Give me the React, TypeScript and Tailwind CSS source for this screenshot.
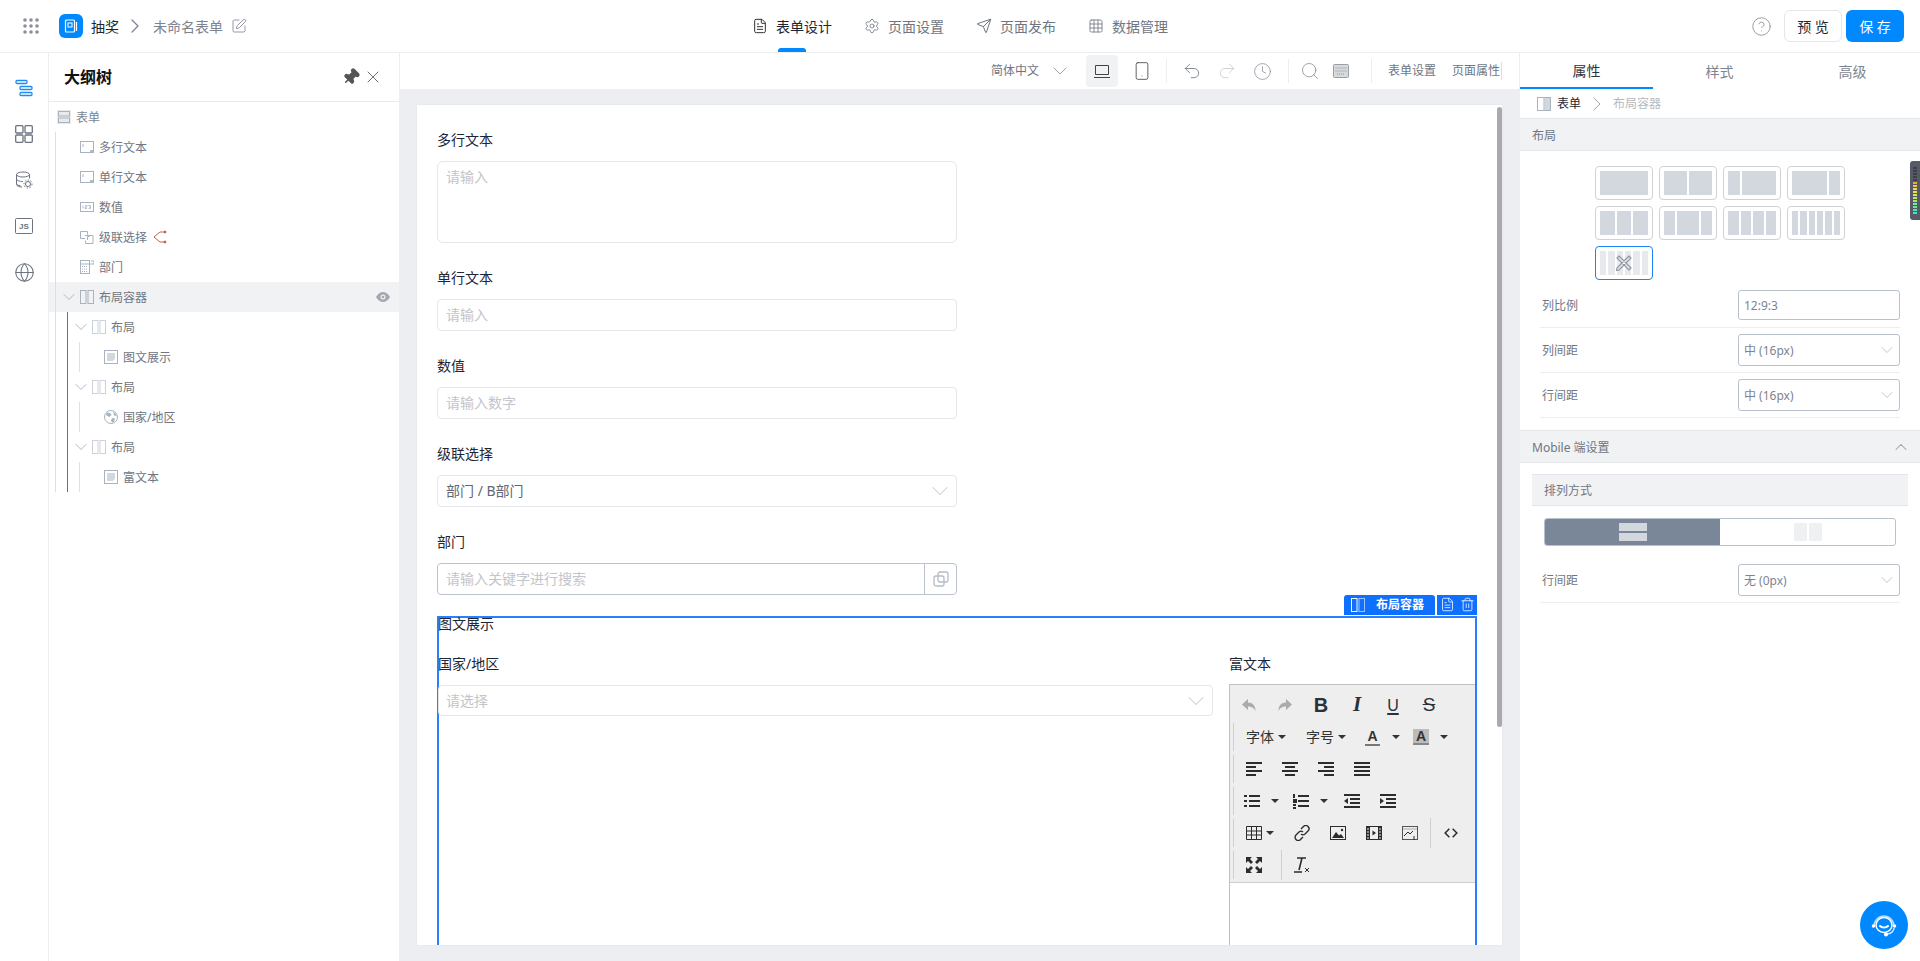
import React from "react";
import { ChevronRight, ChevronDown, ChevronUp, X, Pin, SquarePen, Settings, Send, Grid3x3, Smartphone, Undo2, Redo2, Clock, Search, Globe, CircleHelp, FileText, Trash2 } from "lucide-react";

const Gray = "#6b7380";

function TreeIcon({ kind, className = "" }: { kind: string; className?: string }) {
  const s = "#a9b2c0";
  const f = "#d3d7de";
  return (
    <svg width="14" height="14" viewBox="0 0 14 14" className={"shrink-0 " + className} fill="none">
      {kind === "form" && (<g><rect x="0" y="0" width="14" height="14" fill="#e8eaee" /><rect x="1.5" y="1.5" width="11" height="4.5" stroke={s} /><rect x="1.5" y="8" width="11" height="4.5" stroke={s} /></g>)}
      {kind === "input" && (<g><rect x="0.5" y="1.5" width="13" height="11" stroke={s} /><path d="M3 4v3" stroke={s} /><path d="M10 11h3" stroke={Gray} /></g>)}
      {kind === "num" && (<g><rect x="0.5" y="2.5" width="13" height="9" stroke={s} /><path d="M3 5.5v3M5 5.5h2v1.5h-2v1.5h2M8.5 5.5h2v3h-2M9 7h1.5" stroke={s} strokeWidth="0.8" /></g>)}
      {kind === "cascade" && (<g><path d="M5 8.5H.5v-7h7v3" stroke={s} /><path d="M5 5.5h8v8H5.5v-3" stroke={s} /><path d="M7.5 10V6.5h2" stroke={s} /></g>)}
      {kind === "dept" && (<g><rect x="0.5" y="0.5" width="9" height="13" stroke={s} /><path d="M0 4h14M11 1h3v3" stroke={s} /><path d="M2 6.5h6M2 9h6M2 11.5h6" stroke={s} strokeDasharray="1 1" /></g>)}
      {kind === "cols" && (<g><rect x="0.5" y="0.5" width="5.5" height="13" stroke={s} /><rect x="8" y="0.5" width="5.5" height="13" stroke={s} /></g>)}
      {kind === "colsLight" && (<g><rect x="0.5" y="0.5" width="5.5" height="13" stroke="#ccd2db" /><rect x="8" y="0.5" width="5.5" height="13" stroke="#ccd2db" /></g>)}
      {kind === "colsWhite" && (<g><rect x="0.5" y="0.5" width="5.5" height="13" stroke="#fff" /><rect x="8" y="0.5" width="5.5" height="13" stroke="#9cc4ff" /></g>)}
      {kind === "colsHalf" && (<g><rect x="0.5" y="0.5" width="13" height="13" stroke={s} /><rect x="1" y="1" width="5" height="12" fill="#fff" /><rect x="7.5" y="1" width="5.5" height="12" fill={f} /><path d="M7 0v14" stroke={s} /></g>)}
      {kind === "rich" && (<g><rect x="0.5" y="0.5" width="13" height="13" stroke={s} /><path d="M3 3h8v6l-2.500 2H3z" fill={f} /></g>)}
      {kind === "globe" && (<g><circle cx="7" cy="7" r="6.500" stroke={s} /><path d="M3 2.500l3 .5 1.500 2-2 2-2-1-1.500-1zM8 8l3 .5-1 3.500-2 .5-1-2zM9 1.500l3 2.500.5 2-2.500-.5z" fill={s} /></g>)}
    </svg>
  );
}

function TreeRow({ indent, icon, label, chevron, active, children }: { indent: number; icon: string; label: string; chevron?: boolean; active?: boolean; children?: React.ReactNode }) {
  return (
    <div className={"flex h-[30px] items-center text-[12px] text-[#6f7683] " + (active ? "bg-[#f1f2f4]" : "")} style={{ paddingLeft: indent }}>
      {chevron && <ChevronDown size={20} strokeWidth={1} className="mr-[1px] ml-[-21px] shrink-0 text-[#a3abb8]" />}
      <TreeIcon kind={icon} className="mr-[5px]" />
      <span className="pt-[2px]">{label}</span>
      {children}
    </div>
  );
}

function Field({ label, children }: { label: string; children: React.ReactNode }) {
  return (
    <div className="mb-[24px] w-[520px]">
      <div className="mb-[10px] h-[22px] text-[14px] leading-[22px] text-[#1f2633]">{label}</div>
      {children}
    </div>
  );
}

function TextBox({ placeholder }: { placeholder: string }) {
  return (
    <div className="flex h-[32px] items-center justify-between rounded-[4px] border border-[#e4e6ea] px-[8px] text-[14px] text-[#c2c5cb]">
      <span className="pb-[2px]">{placeholder}</span>
    </div>
  );
}

function Grid({ cols, muted }: { cols: number[]; muted?: boolean }) {
  return (
    <div className={"flex h-[34px] w-[58px] gap-[2px] rounded-[4px] border bg-white p-[4px] " + (muted ? "border-[#1f84f4]" : "border-[#cfd1d5]")}>
      {cols.map((c, i) => (
        <div key={i} className={muted ? "bg-[#e7e9ec]" : "bg-[#d3d7de]"} style={{ flex: c }} />
      ))}
    </div>
  );
}

function PropRow({ label, value, select }: { label: string; value: string; select?: boolean }) {
  return (
    <div className="mx-[20px] flex h-[45px] items-center border-b border-[#eceef0] text-[12px]">
      <span className="w-[198px] pt-[2px] pl-[2px] text-[#6f7683]">{label}</span>
      <div className={"flex w-[162px] items-center justify-between rounded-[3px] border border-[#b9c1cd] pr-[2px] pl-[5px] text-[#7d8491] " + (select ? "h-[32px]" : "h-[30px]")}>
        <span className="pt-[2px]">{value}</span>
        {select && <ChevronDown size={20} strokeWidth={1} className="text-[#b5bcc8]" />}
      </div>
    </div>
  );
}

function SectionHead({ label, up }: { label: string; up?: boolean }) {
  return (
    <div className="flex h-[33px] items-center justify-between border-y border-[#e4e6ea] bg-[#f1f2f4] pr-[9px] pl-[12px] text-[12px] text-[#6f7683]">
      <span className="pt-[2px]">{label}</span>
      {up && <ChevronUp size={20} strokeWidth={1.25} className="text-[#9aa2ae]" />}
    </div>
  );
}

function NavTab({ icon, label, active, w }: { icon: React.ReactNode; label: string; active?: boolean; w: string }) {
  return (
    <div className={"relative flex h-[52px] items-center text-[14px] " + w + " " + (active ? "text-[#1f2633]" : "text-[#6f7683]")}>
      <span className="mr-[8px] flex w-[16px] justify-center">{icon}</span>
      {label}
      {active && <span className="absolute bottom-0 left-[26px] h-[4px] w-[28px] rounded-t-[3px] bg-[#0089ff]" />}
    </div>
  );
}

const IC = "#2c2c2c";
function E({ children, w = 36 }: { children: React.ReactNode; w?: number }) {
  return <div className="flex h-[32px] shrink-0 items-center justify-center" style={{ width: w }}>{children}</div>;
}
function Caret() {
  return <span className="inline-block h-0 w-0 shrink-0 border-x-[4px] border-t-[4px] border-x-transparent border-t-[#333]" />;
}
function Lines({ d }: { d: string }) {
  return <svg width="16" height="16" viewBox="0 0 16 16" className="shrink-0"><path d={d} stroke={IC} strokeWidth="2" fill="none" /></svg>;
}
function ERow({ children }: { children: React.ReactNode }) {
  return (
    <div className="flex h-[32px] items-center">
      <div className="mr-[2px] ml-[3px] h-[28px] w-[1px] shrink-0 bg-[#cfcfcf]" />
      {children}
    </div>
  );
}
function VSep() {
  return <div className="h-[30px] w-[1px] shrink-0 bg-[#cfcfcf]" />;
}

function Editor() {
  return (
    <div className="h-[300px] border border-r-0 border-[#c0c0c0]">
      <div className="h-[198px] border-b border-[#cfcfcf] bg-[#eeeeee]">
        <div className="flex h-[36px] items-center pt-[4px] pl-[1px]">
          <E><svg width="16" height="16" viewBox="0 0 16 16"><path d="M7 2L1 7.500 7 13V9.500c3.500 0 5.500 1 7.500 4.500C14.500 9 12 5.500 7 5.500z" fill="#ababab" /></svg></E>
          <E><svg width="16" height="16" viewBox="0 0 16 16"><path d="M9 2l6 5.500L9 13V9.500c-3.500 0-5.500 1-7.500 4.500C1.500 9 4 5.500 9 5.500z" fill="#ababab" /></svg></E>
          <E><span className="font-['Liberation_Sans'] text-[20px] font-bold text-[#2c3038]">B</span></E>
          <E><span className="font-['Liberation_Serif'] text-[21px] font-bold italic text-[#2c3038]">I</span></E>
          <E><span className="font-['Liberation_Sans'] text-[16px] leading-[17px] text-[#2c3038] underline decoration-2 underline-offset-2">U</span></E>
          <E><span className="font-['Liberation_Sans'] text-[19px] text-[#2c3038] line-through">S</span></E>
        </div>
        <ERow>
          <div className="flex w-[60px] items-center justify-center gap-[4px] text-[14px] leading-none text-[#333]">字体<Caret /></div>
          <div className="flex w-[60px] items-center justify-center gap-[4px] text-[14px] leading-none text-[#333]">字号<Caret /></div>
          <div className="flex w-[49px] items-center gap-[12px] pl-[9px]"><span className="w-[15px] border-b-2 border-[#777] text-center font-['Liberation_Sans'] text-[14px] leading-[16px] font-bold text-[#333]">A</span><Caret /></div>
          <div className="flex w-[50px] items-center gap-[11px] pl-[8px]"><span className="w-[16px] border-b-2 border-[#888] bg-[#bbb] text-center font-['Liberation_Sans'] text-[14px] leading-[14px] font-bold text-[#333]">A</span><Caret /></div>
        </ERow>
        <ERow>
          <E><Lines d="M0 2h16M0 6h10M0 10h16M0 14h10" /></E>
          <E><Lines d="M0 2h16M3 6h10M0 10h16M3 14h10" /></E>
          <E><Lines d="M0 2h16M6 6h10M0 10h16M6 14h10" /></E>
          <E><Lines d="M0 2h16M0 6h16M0 10h16M0 14h16" /></E>
        </ERow>
        <ERow>
          <div className="flex w-[46px] items-center gap-[11px] pl-[8px]"><Lines d="M5 3h11M5 8h11M5 13h11M0 3h3M0 8h3M0 13h3" /><Caret /></div>
          <div className="flex w-[52px] items-center gap-[11px] pl-[11px]"><Lines d="M5 3h11M5 8h11M5 13h11M1 1v4M0 7h3v2H0M0 12h3M0 15h3" /><Caret /></div>
          <E><svg width="16" height="16" viewBox="0 0 16 16"><path d="M0 2h16M6 6h10M6 10h10M0 14h16" stroke={IC} strokeWidth="2" /><path d="M4 5v6L0 8z" fill={IC} /></svg></E>
          <E><svg width="16" height="16" viewBox="0 0 16 16"><path d="M0 2h16M6 6h10M6 10h10M0 14h16" stroke={IC} strokeWidth="2" /><path d="M0 5v6l4-3z" fill={IC} /></svg></E>
        </ERow>
        <ERow>
          <div className="flex w-[48px] items-center gap-[4px] pl-[10px]"><svg width="16" height="16" viewBox="0 0 16 16" className="shrink-0"><path d="M.5 1.500h15v13H.5zM.5 6h15M.5 10h15M5.500 1.500v13M10.500 1.500v13" stroke={IC} fill="none" /></svg><Caret /></div>
          <E><svg width="16" height="16" viewBox="0 0 16 16" fill="none" stroke={IC} strokeWidth="1.400"><path d="M7 4l2.500-2.500a3 3 0 0 1 4.500 4.500L11 9a3 3 0 0 1-4 0" /><path d="M9 12l-2.500 2.500a3 3 0 0 1-4.500-4.500L5 7a3 3 0 0 1 4 0" /></svg></E>
          <E><svg width="16" height="16" viewBox="0 0 16 16"><rect x=".5" y="1.500" width="15" height="13" fill="none" stroke={IC} /><path d="M2 13l4-6 3 3.500 2-1.500 3 4z" fill={IC} /><circle cx="12" cy="5" r="1.200" fill={IC} /></svg></E>
          <E><svg width="16" height="16" viewBox="0 0 16 16"><rect x="0" y="1" width="16" height="14" fill={IC} /><rect x="4" y="2" width="8" height="12" fill="#eee" /><path d="M6.500 5.500v5L10 8z" fill={IC} /><path d="M1 4h2M1 7h2M1 10h2M1 13h2M13 4h2M13 7h2M13 10h2M13 13h2" stroke="#eee" /></svg></E>
          <E><svg width="16" height="16" viewBox="0 0 16 16" fill="none"><rect x=".5" y="1.500" width="15" height="13" stroke="#555" /><path d="M2 11l4-4 2 2 3-3M12 15v-4" stroke={IC} /><path d="M1 4h14" stroke="#aaa" /></svg></E>
          <div className="w-[2px] shrink-0" />
          <VSep />
          <E w={40}><svg width="14" height="10" viewBox="0 0 16 12" fill="none" stroke={IC} strokeWidth="1.800"><path d="M6 1L1 6l5 5M10 1l5 5-5 5" /></svg></E>
        </ERow>
        <ERow>
          <E><svg width="16" height="16" viewBox="0 0 16 16"><path d="M0 0h6L4 2l3 3-2 2-3-3-2 2zM16 0v6l-2-2-3 3-2-2 3-3-2-2zM0 16v-6l2 2 3-3 2 2-3 3 2 2zM16 16h-6l2-2-3-3 2-2 3 3 2-2z" fill={IC} /></svg></E>
          <div className="w-[9px] shrink-0" />
          <VSep />
          <E w={40}><svg width="16" height="16" viewBox="0 0 16 16"><path d="M3 1h9M8 1L5 13M0 15h8" stroke={IC} strokeWidth="1.600" fill="none" /><path d="M11 11l4 4M15 11l-4 4" stroke={IC} /></svg></E>
        </ERow>
      </div>
    </div>
  );
}

export default function App() {
  return (
    <div className="flex h-[961px] w-[1920px] flex-col overflow-hidden bg-white font-['Noto_Sans','Noto_Sans_CJK_SC',sans-serif]">
      <header className="relative flex h-[53px] shrink-0 items-center border-b border-[#eceef2]">
        <svg width="16" height="16" viewBox="0 0 16 16" className="ml-[23px]" fill="#8b8f97">
          {[2, 8, 14].map((y) => [2, 8, 14].map((x) => <circle key={x + "-" + y} cx={x} cy={y} r="1.800" />))}
        </svg>
        <div className="ml-[20px] flex h-[24px] w-[24px] items-center justify-center rounded-[6px] bg-[#0089ff]">
          <svg width="14" height="14" viewBox="0 0 14 14" fill="none" stroke="#fff"><rect x="1.500" y="1" width="9" height="12" rx="1" strokeWidth="1.200" /><rect x="4" y="4" width="4" height="4" strokeWidth="1" /><path d="M12.500 3v9" strokeWidth="1.200" /></svg>
        </div>
        <span className="ml-[8px] text-[14px] text-[#1f2633]">抽奖</span>
        <ChevronRight size={24} strokeWidth={1.25} className="ml-[4px] text-[#7d8491]" />
        <span className="ml-[6px] text-[14px] text-[#7d8491]">未命名表单</span>
        <SquarePen size={16} strokeWidth={1.25} className="ml-[8px] text-[#7d8491]" />
        <div className="absolute top-0 left-[752px] flex">
          <NavTab w="w-[112px]" active label="表单设计" icon={<FileText size={16} strokeWidth={1.5} className="text-[#333]" />} />
          <NavTab w="w-[112px]" label="页面设置" icon={<Settings size={16} strokeWidth={1.25} />} />
          <NavTab w="w-[112px]" label="页面发布" icon={<Send size={16} strokeWidth={1.5} />} />
          <NavTab w="w-[90px]" label="数据管理" icon={<Grid3x3 size={16} strokeWidth={1.25} />} />
        </div>
        <div className="ml-auto flex items-center pr-[16px]">
          <CircleHelp size={21} strokeWidth={1} className="text-[#8b8f97]" />
          <button className="ml-[12px] h-[32px] w-[58px] rounded-[6px] border border-[#e4e6ea] bg-white text-[14px] text-[#1f2633]">预 览</button>
          <button className="ml-[4px] h-[32px] w-[58px] rounded-[6px] bg-[#0089ff] text-[14px] text-white">保 存</button>
        </div>
      </header>

      <div className="flex min-h-0 flex-1">
        <aside className="flex w-[49px] shrink-0 flex-col items-center gap-[28px] border-r border-[#eceef2] pt-[26px] text-[#6b7380]">
          <svg width="18" height="18" viewBox="0 0 18 18" fill="none" stroke="#1f8df5" strokeWidth="1.300"><rect x="1" y="1.500" width="11" height="3" rx="1" /><rect x="5" y="7.500" width="12" height="3" rx="1" /><rect x="5" y="13.500" width="12" height="3" rx="1" /></svg>
          <svg width="18" height="18" viewBox="0 0 18 18" fill="none" stroke="#6b7380" strokeWidth="1.300"><rect x=".7" y=".7" width="7.300" height="7.300" rx="1" /><rect x="10" y=".7" width="7.300" height="7.300" rx="1" /><rect x=".7" y="10" width="7.300" height="7.300" rx="1" /><rect x="10" y="10" width="7.300" height="7.300" rx="1" /></svg>
          <svg width="18" height="18" viewBox="0 0 18 18" fill="none" stroke="#6b7380"><ellipse cx="8" cy="3.500" rx="6.500" ry="2.500" /><path d="M1.500 3.500v10c0 1.300 2.500 2.500 5.500 2.500M1.500 8c0 1.400 3 2.500 6.500 2.500M14.500 3.500v4M1.500 12.500c0 1 1.500 2 4 2.300" /><circle cx="13" cy="13" r="2.500" /><circle cx="13" cy="13" r="4" strokeDasharray="1.500 1.500" /></svg>
          <svg width="18" height="16" viewBox="0 0 18 16" fill="none" className="my-[1px]"><rect x=".5" y=".5" width="17" height="15" rx="1" stroke="#6b7380" /><text x="9" y="11" fontSize="8" fontWeight="700" textAnchor="middle" fill="#6b7380" fontFamily="Liberation Sans">JS</text></svg>
          <Globe size={21} strokeWidth={1.2} className="my-[-1.5px]" />
        </aside>

        <aside className="relative w-[351px] shrink-0 border-r border-[#eceef2]">
          <div className="flex h-[49px] items-center border-b border-[#e8eaee] pr-[16px] pl-[15px]">
            <span className="text-[16px] font-bold text-[#111]">大纲树</span>
            <Pin size={18} className="ml-auto rotate-45 fill-[#555] text-[#555]" />
            <X size={20} strokeWidth={1} className="ml-[3px] text-[#555]" />
          </div>
          <div className="flex h-[30px] items-center pl-[8px] text-[12px] text-[#7d8491]"><TreeIcon kind="form" className="mr-[5px]" /><span className="pt-[2px]">表单</span></div>
          <TreeRow indent={31} icon="input" label="多行文本" />
          <TreeRow indent={31} icon="input" label="单行文本" />
          <TreeRow indent={31} icon="num" label="数值" />
          <TreeRow indent={31} icon="cascade" label="级联选择">
            <svg width="14" height="14" viewBox="0 0 14 14" className="ml-[6px]" fill="none" stroke="#c9603f"><path d="M13 2H7L1 7l6 5h6" /><circle cx="12" cy="2" r="1" fill="#c9603f" /><circle cx="12" cy="12" r="1" fill="#c9603f" /></svg>
          </TreeRow>
          <TreeRow indent={31} icon="dept" label="部门" />
          <TreeRow indent={31} icon="cols" label="布局容器" chevron active>
            <svg width="14" height="10" viewBox="0 0 14 10" className="mr-[9px] ml-auto"><path d="M0 5c2-3.500 4.500-5 7-5s5 1.500 7 5c-2 3.500-4.500 5-7 5s-5-1.500-7-5z" fill="#a3a8b0" /><circle cx="7" cy="5" r="2.500" fill="#f1f2f4" /><circle cx="7" cy="5" r="1.300" fill="#a3a8b0" /></svg>
          </TreeRow>
          <TreeRow indent={43} icon="colsLight" label="布局" chevron />
          <TreeRow indent={55} icon="rich" label="图文展示" />
          <TreeRow indent={43} icon="colsLight" label="布局" chevron />
          <TreeRow indent={55} icon="globe" label="国家/地区" />
          <TreeRow indent={43} icon="colsLight" label="布局" chevron />
          <TreeRow indent={55} icon="rich" label="富文本" />
          <div className="absolute top-[79px] left-[6px] h-[360px] w-[1px] bg-[#dcdfe4]" />
          <div className="absolute top-[259px] left-[18px] h-[180px] w-[1px] bg-[#2a7ae8]" />
          <div className="absolute top-[289px] left-[30px] h-[30px] w-[1px] bg-[#dcdfe4]" />
          <div className="absolute top-[349px] left-[30px] h-[30px] w-[1px] bg-[#dcdfe4]" />
          <div className="absolute top-[409px] left-[30px] h-[30px] w-[1px] bg-[#dcdfe4]" />
        </aside>

        <main className="flex min-w-0 flex-1 flex-col bg-[#eceef2]">
          <div className="flex h-[36px] shrink-0 items-center bg-white text-[12px] text-[#6f7683]">
            <div className="ml-auto flex items-center">
              <span>简体中文</span>
              <ChevronDown size={24} strokeWidth={1} className="ml-[9px] text-[#9aa2ae]" />
              <div className="ml-[14px] flex h-[32px] w-[32px] items-center justify-center rounded-[4px] bg-[#f1f2f4]">
                <svg width="16" height="13" viewBox="0 0 16 13" fill="none" stroke="#444"><path d="M1.500 .5h13v9h-13zM0 12.500h16" /></svg>
              </div>
              <div className="ml-[8px] flex w-[32px] justify-center"><Smartphone size={20} strokeWidth={1} className="text-[#444]" /></div>
              <div className="mx-[8px] h-[24px] w-[1px] bg-[#eceef2]" />
              <Undo2 size={20} strokeWidth={1} className="ml-[7px] text-[#6f7683]" />
              <Redo2 size={20} strokeWidth={1} className="ml-[15px] text-[#c6cad1]" />
              <Clock size={19} strokeWidth={1} className="ml-[16px] text-[#8b8f97]" />
              <div className="mx-[16px] h-[24px] w-[1px] bg-[#eceef2]" />
              <Search size={20} strokeWidth={1} className="ml-[-5px] text-[#8b8f97]" />
              <svg width="16" height="14" viewBox="0 0 16 14" className="ml-[13px]" fill="none"><rect x=".5" y=".5" width="15" height="13" rx="1" fill="#d8dade" stroke="#9a9ea6" /><path d="M2.500 4h11M2.500 7h11M4 10h8" stroke="#8b8f97" strokeDasharray="1 1" /></svg>
              <div className="ml-[22px] h-[24px] w-[1px] bg-[#eceef2]" />
              <span className="ml-[16px]">表单设置</span>
              <span className="ml-[16px] border-r border-[#dcdfe4] pr-[1px]">页面属性</span>
              <div className="w-[17px]" />
            </div>
          </div>
          <div className="relative mt-[16px] mr-[17px] ml-[17px] h-[840px] overflow-hidden bg-white pt-[24px] pl-[20px] shadow-[0_0_2px_rgba(0,0,0,0.06)]">
            <Field label="多行文本">
              <div className="h-[82px] rounded-[6px] border border-[#e4e6ea] px-[8px] pt-[4px] text-[14px] text-[#c2c5cb]">请输入</div>
            </Field>
            <Field label="单行文本"><TextBox placeholder="请输入" /></Field>
            <Field label="数值"><TextBox placeholder="请输入数字" /></Field>
            <Field label="级联选择">
              <div className="flex h-[32px] items-center justify-between rounded-[4px] border border-[#e4e6ea] pr-[2px] pl-[8px] text-[14px] text-[#5f6774]">
                <span className="pb-[2px]">部门 / B部门</span>
                <ChevronDown size={28} strokeWidth={0.8} className="text-[#b5bcc8]" />
              </div>
            </Field>
            <div className="w-[520px]">
              <div className="mb-[10px] h-[22px] text-[14px] leading-[22px] text-[#1f2633]">部门</div>
              <div className="flex h-[32px] items-center rounded-[4px] border border-[#bcc3ce] text-[14px] text-[#c2c5cb]">
                <span className="flex-1 pb-[2px] pl-[8px]">请输入关键字进行搜索</span>
                <div className="flex h-full w-[32px] items-center justify-center border-l border-[#bcc3ce]">
                  <svg width="16" height="16" viewBox="0 0 16 16" fill="none" stroke="#b5bcc8" strokeWidth="1.300"><rect x="5" y="1" width="10" height="10" rx="2" /><rect x="1" y="5" width="10" height="10" rx="2" /></svg>
                </div>
              </div>
            </div>
            <div className="mt-[21px] mr-[25px] h-[340px] border-2 border-b-0 border-[#2a7fff]">
              <div className="ml-[-1px] h-[18px] text-[14px] leading-[12px] text-[#1f2633]">图文展示</div>
              <div className="flex">
                <div className="ml-[-1px] flex-1">
                  <div className="mt-[17px] h-[21px] text-[14px] leading-[21px] text-[#1f2633]">国家/地区</div>
                  <div className="mt-[11px] flex h-[31px] items-center justify-between rounded-[4px] border border-[#e4e6ea] pr-[2px] pl-[7px] text-[14px] text-[#c2c5cb]">
                    <span>请选择</span>
                    <ChevronDown size={28} strokeWidth={0.8} className="text-[#b5bcc8]" />
                  </div>
                </div>
                <div className="ml-[16px] w-[246px]">
                  <div className="mt-[17px] h-[21px] text-[14px] leading-[21px] text-[#1f2633]">富文本</div>
                  <div className="mt-[10px]"><Editor /></div>
                </div>
              </div>
            </div>
            <div className="absolute top-[489px] left-[927px] flex h-[21px] items-center gap-[2px] text-white">
              <div className="flex h-[20px] w-[91px] items-center rounded-t-[3px] bg-[#0f6fff] pl-[7px] text-[12px] font-bold">
                <TreeIcon kind="colsWhite" className="mr-[11px]" />布局容器
              </div>
              <div className="flex h-[20px] w-[40px] items-center justify-center gap-[5px] bg-[#0f6fff]">
                <FileText size={15} strokeWidth={1.25} />
                <Trash2 size={15} strokeWidth={1.25} />
              </div>
            </div>
            <div className="absolute top-[2px] right-0 h-[620px] w-[5px] rounded-full bg-[#a9aab0]" />
          </div>
        </main>

        <aside className="relative w-[401px] shrink-0 border-l border-[#eceef2]">
          <div className="flex h-[36px] text-[14px] text-[#7d8491]">
            <div className="flex w-[133px] items-center justify-center border-b-2 border-[#0089ff] text-[#2c3340]">属性</div>
            <div className="flex w-[133px] items-center justify-center">样式</div>
            <div className="flex w-[133px] items-center justify-center">高级</div>
          </div>
          <div className="flex h-[29px] items-center pl-[17px] text-[12px]">
            <TreeIcon kind="colsHalf" className="mr-[6px]" />
            <span className="text-[#1f2633]">表单</span>
            <ChevronRight size={24} strokeWidth={1} className="mx-[4px] text-[#9aa2ae]" />
            <span className="text-[#b5b9c0]">布局容器</span>
          </div>
          <SectionHead label="布局" />
          <div className="ml-[75px] grid w-[250px] grid-cols-[repeat(4,58px)] gap-[6px] pt-[15px]">
            <Grid cols={[1]} />
            <Grid cols={[1, 1]} />
            <Grid cols={[1, 3]} />
            <Grid cols={[3, 1]} />
            <Grid cols={[1, 1, 1]} />
            <Grid cols={[1, 2, 1]} />
            <Grid cols={[1, 1, 1, 1]} />
            <Grid cols={[1, 1, 1, 1, 1, 1]} />
            <div className="relative">
              <Grid muted cols={[1, 1, 1, 1, 1, 1]} />
              <svg width="16" height="16" viewBox="0 0 16 16" className="absolute top-[9px] left-[21px]" fill="none" stroke="#8f97a3" strokeWidth="1.200"><path d="M3 1l12 12-2 2L1 3zM13 1L1 13l-.500 2.500L3 15 15 3z" /></svg>
            </div>
          </div>
          <div className="pt-[3px]">
            <PropRow label="列比例" value="12:9:3" />
            <PropRow label="列间距" value="中 (16px)" select />
            <PropRow label="行间距" value="中 (16px)" select />
          </div>
          <div className="mt-[12px]"><SectionHead label="Mobile 端设置" up /></div>
          <div className="mx-[12px] mt-[11px] flex h-[32px] items-center border-y border-[#e4e6ea] bg-[#f1f2f4] pl-[12px] text-[12px] text-[#6f7683]"><span className="pt-[2px]">排列方式</span></div>
          <div className="mx-[24px] mt-[12px] flex h-[28px] overflow-hidden rounded-[3px] border border-[#b9c1cd]">
            <div className="flex flex-1 flex-col items-center justify-center gap-[2px] bg-[#7a8799]">
              <div className="h-[8px] w-[28px] bg-[#d3d7de]" />
              <div className="h-[8px] w-[28px] bg-[#d3d7de]" />
            </div>
            <div className="flex flex-1 items-center justify-center gap-[2px]">
              <div className="h-[18px] w-[13px] bg-[#eef0f2]" />
              <div className="h-[18px] w-[13px] bg-[#eef0f2]" />
            </div>
          </div>
          <div className="mt-[12px]">
            <PropRow label="行间距" value="无 (0px)" select />
          </div>
          <div className="absolute top-[108px] right-0 flex h-[59px] w-[10px] flex-col items-center justify-center gap-[1px] rounded-l-[3px] bg-[#555a66]">
            {["#3d4048", "#3d4048", "#3d4048", "#3d4048", "#3d4048", "#f0a93a", "#f4c63f", "#f4d84a", "#e8e457", "#d8e65c", "#b8e86a", "#9ce97a", "#7eea8c", "#64e8a0", "#52e4b4", "#4ae0c4"].map((c, i) => (
              <div key={i} className="h-[2px] w-[4px]" style={{ background: c }} />
            ))}
          </div>
          <div className="absolute right-[12px] bottom-[12px] flex h-[48px] w-[48px] items-center justify-center rounded-full bg-[#0089ff]">
            <svg width="30" height="30" viewBox="0 0 30 30" fill="none" stroke="#fff" strokeWidth="1.500">
              <path d="M5 16a10 10 0 0 1 20 0" strokeOpacity="0.7" />
              <ellipse cx="15" cy="15" rx="8" ry="7.500" />
              <path d="M11 16c2 2 6 2 8 0" strokeWidth="2" strokeLinecap="round" />
              <path d="M25 18c0 3-3 6-7 6" strokeOpacity="0.8" />
              <circle cx="17" cy="24.500" r="1.300" fill="#fff" />
              <circle cx="4.500" cy="16" r="1" fill="#fff" />
              <circle cx="25.500" cy="16" r="1" fill="#fff" />
            </svg>
          </div>
        </aside>
      </div>
    </div>
  );
}
